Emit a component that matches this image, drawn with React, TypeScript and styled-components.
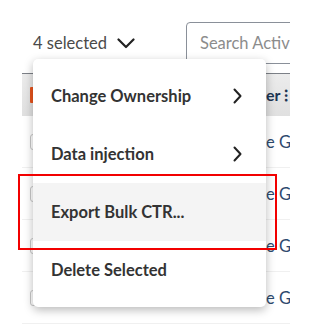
import React from "react";
import styled, { createGlobalStyle } from "styled-components";

const Global = createGlobalStyle`
  html, body { margin: 0; padding: 0; background: #fff; }
  body { font-family: Lato, "Open Sans", sans-serif; }
`;

const Page = styled.div`
  position: relative;
  width: 311px;
  height: 328px;
  overflow: hidden;
  background: #fff;
`;

const Frame = styled.div`
  margin-left: 22px;
  width: 268px;
  height: 328px;
  overflow: hidden;
`;

const Toolbar = styled.div`
  display: flex;
  align-items: center;
  height: 73px;
  padding: 22px 0 9px 11px;
  box-sizing: border-box;
`;

const Selected = styled.div`
  flex: none;
  display: flex;
  align-items: center;
  gap: 10px;
  width: 153px;
  font-size: 16.5px;
  color: #4a4a4a;
  white-space: nowrap;
`;

const Search = styled.div`
  flex: none;
  width: 200px;
  height: 42px;
  box-sizing: border-box;
  border: 1px solid #8a9099;
  border-radius: 4px;
  display: flex;
  align-items: center;
  padding-left: 13px;
  font-size: 16.5px;
  color: #8c8c8c;
  white-space: nowrap;
`;

const HeaderRow = styled.div`
  display: grid;
  grid-template-columns: 8px 236px auto;
  align-items: center;
  height: 43px;
  border-top: 1px solid #7c8087;
  background: linear-gradient(#ececec, #e0e0e0);
  box-sizing: border-box;
`;

const Marker = styled.div`
  width: 4px;
  height: 16px;
  background: #e8541c;
  border-radius: 1px;
`;

const HeaderText = styled.div`
  font-weight: 700;
  font-size: 16px;
  color: #1d3553;
  white-space: nowrap;
`;

const Row = styled.div`
  display: grid;
  grid-template-columns: 8px 16px 220px auto;
  align-items: center;
  height: 52px;
  border-bottom: 1px solid #f0f0f0;
  box-sizing: border-box;
`;

const Check = styled.div`
  grid-column: 2;
  width: 14px;
  height: 16px;
  border: 1px solid #c8c8c8;
  border-radius: 3px;
  box-sizing: border-box;
`;

const Cell = styled.div`
  grid-column: 4;
  font-size: 16.5px;
  color: #2e4a6e;
  white-space: nowrap;
`;

const Menu = styled.div`
  position: absolute;
  left: 33px;
  top: 59px;
  width: 233px;
  padding: 8px 0;
  background: #fff;
  border-radius: 5px;
  box-shadow: 0 3px 10px rgba(0, 0, 0, 0.28);
  display: flex;
  flex-direction: column;
`;

const Item = styled.div<{ $active?: boolean }>`
  display: flex;
  align-items: center;
  justify-content: space-between;
  height: 58px;
  padding: 0 24px 0 18px;
  background: ${(p) => (p.$active ? "#f4f4f4" : "transparent")};
  font-weight: 700;
  font-size: 16.5px;
  color: #333;
  white-space: nowrap;
`;

const Highlight = styled.div`
  position: absolute;
  left: 18px;
  top: 174px;
  width: 259px;
  height: 76px;
  border: 2px solid #f20000;
  box-sizing: border-box;
`;

const ChevronRight = () => (
  <svg width="9" height="16" viewBox="0 0 9 16" fill="none">
    <path d="M1.5 1.5 L7.5 8 L1.5 14.5" stroke="#222" strokeWidth="2" strokeLinecap="round" strokeLinejoin="round" />
  </svg>
);

const ChevronDown = () => (
  <svg width="18" height="11" viewBox="0 0 18 11" fill="none">
    <path d="M1.5 1.5 L9 9 L16.5 1.5" stroke="#222" strokeWidth="2.2" strokeLinecap="round" strokeLinejoin="round" />
  </svg>
);

export default function App() {
  return (
    <Page>
      <Global />
      <Frame>
        <Toolbar>
          <Selected>
            4 selected <ChevronDown />
          </Selected>
          <Search>Search Activ</Search>
        </Toolbar>
        <HeaderRow>
          <div />
          <Marker />
          <HeaderText>er ⁝</HeaderText>
        </HeaderRow>
        {[0, 1, 2, 3].map((i) => (
          <Row key={i}>
            <Check />
            <Cell>e G</Cell>
          </Row>
        ))}
      </Frame>
      <Menu>
        <Item>
          Change Ownership <ChevronRight />
        </Item>
        <Item>
          Data injection <ChevronRight />
        </Item>
        <Item $active>Export Bulk CTR...</Item>
        <Item>Delete Selected</Item>
      </Menu>
      <Highlight />
    </Page>
  );
}
